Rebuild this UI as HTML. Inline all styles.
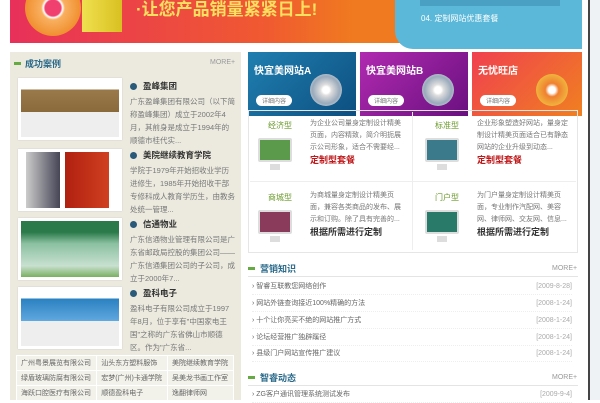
<!DOCTYPE html><html><head><meta charset="utf-8"><style>
*{margin:0;padding:0;box-sizing:border-box}
body{width:600px;height:400px;overflow:hidden;background:#fff;font-family:"Liberation Sans","Noto Sans CJK SC",sans-serif;font-size:8px;color:#666;position:relative}
.a{position:absolute}
.hd{font-size:9px;color:#2a6a8a;font-weight:bold}
.more{font-size:7px;color:#999}
.thumb{position:absolute;left:18px;width:104px;height:62px;border:3px solid #fff;box-shadow:0 0 1px #bbb}
.it{position:absolute;left:130px;width:106px;line-height:13px;font-size:7.5px;color:#777}
.it b{display:block;color:#333;font-size:8.5px;margin-bottom:2px}
.it b:before{content:"";display:inline-block;width:7px;height:7px;border-radius:50%;background:#2a5a7a;margin-right:6px;vertical-align:-1px}
.bn{position:absolute;top:52px;height:64px;width:108px;color:#fff;font-weight:bold;font-size:10px;padding:10px 6px}
.bn i{position:absolute;left:8px;bottom:10px;font-style:normal;font-size:6px;font-weight:normal;background:#fff;color:#777;border-radius:6px;padding:1px 6px}
.bn s{position:absolute;right:14px;top:22px;width:32px;height:32px;border-radius:50%;background:radial-gradient(#fff 15%,#ddd 25%,#9ab 60%,#eee 100%);text-decoration:none}
.cell{position:absolute;width:160px;height:70px;font-size:7px;line-height:12px;color:#777}
.cell .t{position:absolute;left:18px;top:8px;color:#6a9a2a;font-size:8px}
.cell .m{position:absolute;left:8px;top:26px;width:34px;height:24px;border:2px solid #ddd;border-radius:2px}
.cell .m:after{content:"";position:absolute;left:10px;top:24px;width:10px;height:6px;background:#ddd}
.cell .d{position:absolute;left:60px;top:6px;width:95px}
.cell .d b{display:block;font-size:9px;color:#c0181a}
.li{position:absolute;left:252px;width:320px;font-size:7px;color:#666;border-bottom:1px dotted #eee;height:17px;line-height:17px}
.li span{float:right;color:#aaa}
td{border:1px solid #fff;padding:0 4px;height:15px;font-size:7px;color:#666}
</style></head><body>
<div class="a" style="left:10px;top:0;width:572px;height:43px;background:linear-gradient(90deg,#e8305a,#f05a30 45%,#f07a20 60%)"></div>
<div class="a" style="left:25px;top:-20px;width:56px;height:56px;border-radius:50%;background:radial-gradient(#f04070 20%,#fff 24%,#f9b060 30%,#f09030 70%,#e07020)"></div>
<div class="a" style="left:82px;top:0;width:40px;height:32px;background:linear-gradient(90deg,#f0e050,#d8c020)"></div>
<div class="a" style="left:136px;top:-5px;font-size:17px;color:#fce060;font-weight:bold">·让您产品销量紧紧日上!</div>
<div class="a" style="left:395px;top:0;width:187px;height:49px;background:#5bb8d8;border-radius:0 0 0 18px"></div>
<div class="a" style="left:420px;top:0;width:140px;height:6px;background:#4aa0c2"></div>
<div class="a" style="left:421px;top:13px;color:#fff;font-size:8px">04. 定制网站优惠套餐</div>
<div class="a" style="left:588px;top:0;width:2px;height:400px;background:#444"></div>
<div class="a" style="left:590px;top:0;width:10px;height:400px;background:#eef2f5"></div>

<div class="a" style="left:10px;top:52px;width:231px;height:348px;background:#eceadf"></div>
<div class="a" style="left:14px;top:62px;width:7px;height:3px;background:#6a4"></div>
<div class="a hd" style="left:25px;top:57px">成功案例</div>
<div class="a more" style="left:210px;top:59px">MORE+</div>
<div class="thumb" style="top:78px;background:linear-gradient(#fff 15%,#9a7a4a 15%,#8a6a3a 55%,#eee 55%)"></div>
<div class="it" style="top:80px"><b>盈峰集团</b>广东盈峰集团有限公司（以下简称盈峰集团）成立于2002年4月，其前身是成立于1994年的顺德市桂代实...</div>
<div class="thumb" style="top:149px;background:linear-gradient(90deg,#fff 5%,#ccc 5%,#445 40%,#fff 40%,#fff 45%,#b02010 45%,#d04020 90%,#fff 90%)"></div>
<div class="it" style="top:149px"><b>美院继续教育学院</b>学院于1979年开始招收业学历进修生，1985年开始招收干部专修科成人教育学历生，由教务处统一管理...</div>
<div class="thumb" style="top:218px;background:linear-gradient(#2a7a4a 20%,#8ac0a0 40%,#c8e0d0 80%,#7ab060)"></div>
<div class="it" style="top:218px"><b>信通物业</b>广东信通物业管理有限公司是广东省邮政局控股的集团公司——广东信通集团公司的子公司，成立于2000年7...</div>
<div class="thumb" style="top:287px;background:linear-gradient(#fff 15%,#2a80c0 15%,#60a8e0 55%,#eee 55%)"></div>
<div class="it" style="top:287px"><b>盈科电子</b>盈科电子有限公司成立于1997年8月，位于享有"中国家电王国"之称的广东省佛山市顺德区。作为"广东省...</div>
<table class="a" style="left:16px;top:355px;width:218px;border-collapse:collapse;background:#f2f1ea"><tr><td>广州粤景展览有限公司</td><td>汕头东方塑料服饰</td><td>美院继续教育学院</td></tr><tr><td>绿盾玻璃防腐有限公司</td><td>宏梦(广州)卡通学院</td><td>吴美龙书画工作室</td></tr><tr><td>海跃口腔医疗有限公司</td><td>顺德盈科电子</td><td>逸翻律师网</td></tr></table>

<div class="bn" style="left:248px;background:linear-gradient(135deg,#1f7fb0,#0d4f80)">快宜美网站A<s></s><i>详细内容</i></div>
<div class="bn" style="left:360px;background:linear-gradient(135deg,#b02ab0,#6a1080)">快宜美网站B<s></s><i>详细内容</i></div>
<div class="bn" style="left:472px;width:110px;background:linear-gradient(135deg,#f04050,#f08020)">无忧旺店<s style="background:radial-gradient(#fff 15%,#f08030 30%,#f0c040 80%)"></s><i>详细内容</i></div>

<div class="a" style="left:248px;top:110px;width:330px;height:143px;border:1px solid #e6e6e6"></div>
<div class="a" style="left:412px;top:112px;width:1px;height:138px;background:#eee"></div>
<div class="a" style="left:250px;top:181px;width:326px;height:1px;background:#eee"></div>
<div class="cell" style="left:250px;top:112px"><div class="t">经济型</div><div class="m" style="background:#5a9a4a"></div><div class="d">为企业公司量身定制设计精美页面，内容精致，简介明扼展示公司形象，适合不需要经...<b>定制型套餐</b></div></div>
<div class="cell" style="left:417px;top:112px"><div class="t">标准型</div><div class="m" style="background:#3a7a8a"></div><div class="d">企业形象塑造好网站，量身定制设计精美页面适合已有静态网站的企业升级到动态...<b>定制型套餐</b></div></div>
<div class="cell" style="left:250px;top:184px"><div class="t">商城型</div><div class="m" style="background:#8a3a5a"></div><div class="d">为商城量身定制设计精美页面，兼容各类商品的发布、展示和订购。除了具有完善的...<b style="color:#333">根据所需进行定制</b></div></div>
<div class="cell" style="left:417px;top:184px"><div class="t">门户型</div><div class="m" style="background:#2a7a6a"></div><div class="d">为门户量身定制设计精美页面，专业制作汽配网、美容网、律师网、交友网、信息...<b style="color:#333">根据所需进行定制</b></div></div>

<div class="a" style="left:248px;top:267px;width:7px;height:3px;background:#6a4"></div>
<div class="a hd" style="left:260px;top:262px">营销知识</div>
<div class="a more" style="left:552px;top:265px">MORE+</div>
<div class="a" style="left:248px;top:276px;width:330px;height:1px;background:#e4e4e4"></div>
<div class="li" style="top:278px">› 智睿互联教您网络创作<span>[2009-8-28]</span></div>
<div class="li" style="top:295px">› 网站外链查询接近100%精确的方法<span>[2008-1-24]</span></div>
<div class="li" style="top:312px">› 十个让你亮买不绝的网站推广方式<span>[2008-1-24]</span></div>
<div class="li" style="top:329px">› 论坛经营推广独辟蹊径<span>[2008-1-24]</span></div>
<div class="li" style="top:345px">› 县级门户网站宣传推广建议<span>[2008-1-24]</span></div>
<div class="a" style="left:248px;top:376px;width:7px;height:3px;background:#6a4"></div>
<div class="a hd" style="left:260px;top:371px">智睿动态</div>
<div class="a more" style="left:552px;top:374px">MORE+</div>
<div class="a" style="left:248px;top:385px;width:330px;height:1px;background:#e4e4e4"></div>
<div class="li" style="top:386px">› ZG客户通讯管理系统测试发布<span>[2009-9-4]</span></div>
</body></html>
